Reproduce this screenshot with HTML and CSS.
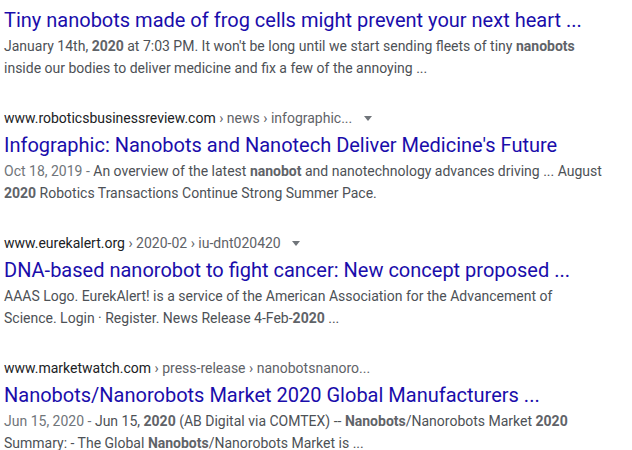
FILE: index.html
```html
<!DOCTYPE html>
<html>
<head>
<meta charset="utf-8">
<link rel="stylesheet" href="styles.css">
</head>
<body>
<div class="results">
  <div class="result">
    <div class="url"><span class="domain">gizmodo.com</span> › tiny-nanobots</div>
    <h3 class="title"><a>Tiny nanobots made of frog cells might prevent your next heart ...</a></h3>
    <div class="snippet">January 14th, <b>2020</b> at 7:03 PM. It won't be long until we start sending fleets of tiny <b>nanobots</b> inside our bodies to deliver medicine and fix a few of the annoying ...</div>
  </div>
  <div class="result">
    <div class="url"><span class="domain">www.roboticsbusinessreview.com</span> › news › infographic... <span class="caret"></span></div>
    <h3 class="title"><a>Infographic: Nanobots and Nanotech Deliver Medicine's Future</a></h3>
    <div class="snippet"><span class="date">Oct 18, 2019 - </span>An overview of the latest <b>nanobot</b> and nanotechnology advances driving ... August <b>2020</b> Robotics Transactions Continue Strong Summer Pace.</div>
  </div>
  <div class="result">
    <div class="url"><span class="domain">www.eurekalert.org</span> › 2020-02 › iu-dnt020420 <span class="caret"></span></div>
    <h3 class="title"><a>DNA-based nanorobot to fight cancer: New concept proposed ...</a></h3>
    <div class="snippet">AAAS Logo. EurekAlert! is a service of the American Association for the Advancement of Science. Login · Register. News Release 4-Feb-<b>2020</b> ...</div>
  </div>
  <div class="result">
    <div class="url"><span class="domain">www.marketwatch.com</span> › press-release › nanobotsnanoro...</div>
    <h3 class="title"><a>Nanobots/Nanorobots Market 2020 Global Manufacturers ...</a></h3>
    <div class="snippet"><span class="date">Jun 15, 2020 - </span>Jun 15, <b>2020</b> (AB Digital via COMTEX) -- <b>Nanobots</b>/Nanorobots Market <b>2020</b> Summary: - The Global <b>Nanobots</b>/Nanorobots Market is ...</div>
  </div>
</div>
</body>
</html>
```
FILE: styles.css
```css
html, body {
  margin: 0;
  padding: 0;
  background: #fff;
}
body {
  font-family: Roboto, "Liberation Sans", Arial, sans-serif;
  overflow: hidden;
}
.results {
  margin-top: -19px;
  padding-left: 4px;
  width: 600px;
}
.result {
  margin-bottom: 30px;
}
.result:first-child .url {
  margin-bottom: 3px;
}
.url {
  font-size: 14px;
  line-height: 18px;
  color: #5f6368;
  white-space: nowrap;
}
.domain {
  color: #202124;
}
.caret {
  display: inline-block;
  width: 0;
  height: 0;
  margin-left: 8px;
  border-left: 4.5px solid transparent;
  border-right: 4.5px solid transparent;
  border-top: 5px solid #70757a;
  vertical-align: middle;
  position: relative;
  top: -1px;
}
.title {
  margin: 0 0 2px;
  padding-top: 5px;
  font-size: 20px;
  line-height: 26px;
  font-weight: 400;
  white-space: nowrap;
}
.title a {
  color: #1a0dab;
}
.snippet {
  font-size: 14px;
  line-height: 22px;
  color: #4d5156;
}
.snippet b {
  color: #5f6368;
  font-weight: 700;
}
.date {
  color: #70757a;
}
```
